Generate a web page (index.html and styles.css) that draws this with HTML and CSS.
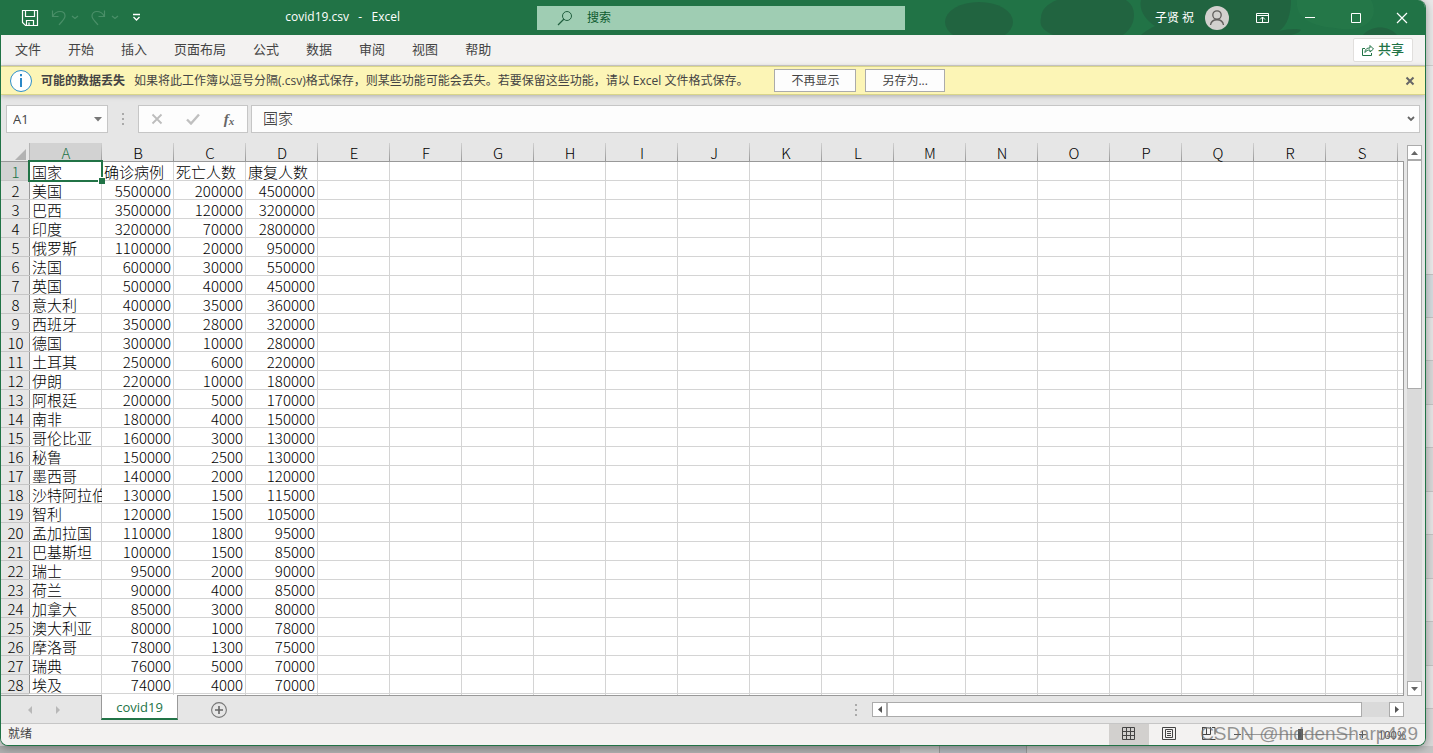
FILE: index.html
```html
<!DOCTYPE html>
<html lang="zh-CN">
<head>
<meta charset="utf-8">
<title>covid19.csv - Excel</title>
<link rel="stylesheet" href="styles.css">
</head>
<body>
<div class="window">
  <header class="titlebar">
    <svg class="art" width="500" height="35" viewBox="0 0 500 35" aria-hidden="true">
      <g fill="#215f3f" fill-opacity=".75"><ellipse cx="54" cy="22" rx="34" ry="20"/><path d="M116 18C116 2 140-6 172-6S212 6 208 22C206 28 202 32 198 35H128C118 30 114 26 116 18Z"/><path d="M216 0H366C366 14 362 26 354 31C362 29 372 28 376 30C374 33 370 34 366 35H216C222 30 226 28 230 26C218 18 214 8 216 0Z"/><path d="M438 35C446 25 464 25 472 35Z"/></g>
      <path d="M372 0H446C456 18 440 34 410 28C386 26 370 18 372 0Z" fill="#2a8050" fill-opacity=".3"/>
    </svg>
    <div class="quick">
      <button aria-label="保存"><svg width="18" height="18" viewBox="0 0 18 18"><path d="M1.500 1.500h15v15h-12l-3-3zM4.500 1.500v6h9v-6M5.500 16v-4.500h7V16M8 16v-2.500" fill="none" stroke="#fff" stroke-width="1.200"/></svg></button>
      <button aria-label="撤消"><svg width="28" height="18" viewBox="0 0 28 18"><path d="M1.500 1.500v6h6M2 7C5 1 14 1 14 7c0 3-3 5-6 9M21 7l3 2.500L27 7" fill="none" stroke="#4a8f68" stroke-width="1.200"/></svg></button>
      <button aria-label="恢复"><svg width="28" height="18" viewBox="0 0 28 18"><path d="M13.500 1.500v6h-6M13 7C10 1 1 1 1 7c0 3 3 5 6 9M21 7l3 2.500L27 7" fill="none" stroke="#4a8f68" stroke-width="1.200"/></svg></button>
      <button aria-label="自定义快速访问工具栏"><svg width="9" height="9" viewBox="0 0 9 9"><path d="M1 1.500h7M1.500 4l3 3 3-3" fill="none" stroke="#fff" stroke-width="1.300"/></svg></button>
    </div>
    <h1 class="doc">covid19.csv&nbsp; &nbsp;-&nbsp; &nbsp;Excel</h1>
    <label class="search">
      <svg width="16" height="16" viewBox="0 0 16 16"><circle cx="10" cy="6" r="4.500" fill="none" stroke="#215f3f"/><path d="M7 9L1 15" stroke="#215f3f" stroke-width="1.200"/></svg>
      <input type="text" aria-label="搜索" placeholder="搜索">
    </label>
    <div class="account">
      <span>子贤 祝</span>
      <svg width="24" height="24" viewBox="0 0 24 24"><circle cx="12" cy="12" r="12" fill="#d2d0ce"/><circle cx="12" cy="9" r="4.200" fill="none" stroke="#5f5d5b" stroke-width="1.300"/><path d="M5.500 19c1-7 12-7 13 0" fill="none" stroke="#5f5d5b" stroke-width="1.300"/></svg>
    </div>
    <div class="controls">
      <button aria-label="功能区显示选项"><svg width="14" height="12" viewBox="0 0 14 12"><path d="M.5 1.500h12v9H.5zM.5 3.500h12M6.500 10V5M4 7.500L6.500 5 9 7.500" fill="none" stroke="#fff"/></svg></button>
      <button aria-label="最小化"><svg width="12" height="12" viewBox="0 0 12 12"><path d="M1 5.500h10" stroke="#fff"/></svg></button>
      <button aria-label="最大化"><svg width="12" height="12" viewBox="0 0 12 12"><path d="M1.500 1.500h9v9h-9z" fill="none" stroke="#fff"/></svg></button>
      <button aria-label="关闭"><svg width="12" height="12" viewBox="0 0 12 12"><path d="M1 1l10 10M11 1L1 11" stroke="#fff" stroke-width="1.200"/></svg></button>
    </div>
  </header>

  <nav class="ribbon">
    <div class="tabs">
      <button>文件</button><button>开始</button><button>插入</button><button>页面布局</button><button>公式</button><button>数据</button><button>审阅</button><button>视图</button><button>帮助</button>
    </div>
    <button class="share"><svg width="12" height="12" viewBox="0 0 12 12"><path d="M3 4.500H.5v7h9V9M3 8.500C3 5 5 4 8 4V1.500l3.500 3.500L8 8V6C6 6 4 6.500 3 8.500z" fill="none" stroke="#217346"/></svg><span>共享</span></button>
  </nav>

  <section class="message">
    <svg class="info" width="24" height="24" viewBox="0 0 24 24"><circle cx="12" cy="12" r="10.500" fill="#fff" stroke="#2f8fc8"/><path d="M12 5v2.200M12 9v9" stroke="#2b88c6" stroke-width="2"/></svg>
    <strong>可能的数据丢失</strong>
    <p>如果将此工作簿以逗号分隔(.csv)格式保存，则某些功能可能会丢失。若要保留这些功能，请以 Excel 文件格式保存。</p>
    <button class="plain">不再显示</button>
    <button class="plain">另存为...</button>
    <button class="dismiss" aria-label="关闭消息"><svg width="10" height="10" viewBox="0 0 10 10"><path d="M1.500 1.500l7 7M8.500 1.500l-7 7" stroke="#666" stroke-width="2"/></svg></button>
  </section>

  <section class="formula">
    <label class="namebox"><input type="text" aria-label="名称框" value="A1"><svg width="8" height="5" viewBox="0 0 8 5"><path d="M0 0h8L4 4.500z" fill="#777"/></svg></label>
    <svg class="grip" width="2" height="12" viewBox="0 0 2 12"><path d="M0 0h2v2H0zM0 5h2v2H0zM0 10h2v2H0z" fill="#aaa"/></svg>
    <div class="fx">
      <button aria-label="取消"><svg width="12" height="12" viewBox="0 0 12 12"><path d="M1.500 1.500l9 9M10.500 1.500l-9 9" stroke="#bdbdbd" stroke-width="1.800"/></svg></button>
      <button aria-label="输入"><svg width="14" height="12" viewBox="0 0 14 12"><path d="M1 6.500l4 4L13 1.500" fill="none" stroke="#c0c0c0" stroke-width="2.400"/></svg></button>
      <button aria-label="插入函数"><i>f</i><i class="sub">x</i></button>
    </div>
    <label class="entry"><input type="text" aria-label="编辑栏" value="国家"><svg width="8" height="6" viewBox="0 0 8 6"><path d="M1 1l3 3 3-3" fill="none" stroke="#666" stroke-width="1.800"/></svg></label>
  </section>

  <main class="work">
    <div class="grid">
      <table>
        <colgroup><col class="c-head"><col span="19" class="c-cell"><col></colgroup>
        <thead><tr><th class="corner"><svg width="11" height="11" viewBox="0 0 11 11"><path d="M11 0v11H0z" fill="#b2b2b2"/></svg></th><th class="on">A</th><th>B</th><th>C</th><th>D</th><th>E</th><th>F</th><th>G</th><th>H</th><th>I</th><th>J</th><th>K</th><th>L</th><th>M</th><th>N</th><th>O</th><th>P</th><th>Q</th><th>R</th><th>S</th><th></th></tr></thead>
        <tbody>
          <tr><th class="on">1</th><td class="active">国家</td><td class="t">确诊病例</td><td class="t">死亡人数</td><td class="t">康复人数</td></tr>
          <tr><th>2</th><td>美国</td><td>5500000</td><td>200000</td><td>4500000</td></tr>
          <tr><th>3</th><td>巴西</td><td>3500000</td><td>120000</td><td>3200000</td></tr>
          <tr><th>4</th><td>印度</td><td>3200000</td><td>70000</td><td>2800000</td></tr>
          <tr><th>5</th><td>俄罗斯</td><td>1100000</td><td>20000</td><td>950000</td></tr>
          <tr><th>6</th><td>法国</td><td>600000</td><td>30000</td><td>550000</td></tr>
          <tr><th>7</th><td>英国</td><td>500000</td><td>40000</td><td>450000</td></tr>
          <tr><th>8</th><td>意大利</td><td>400000</td><td>35000</td><td>360000</td></tr>
          <tr><th>9</th><td>西班牙</td><td>350000</td><td>28000</td><td>320000</td></tr>
          <tr><th>10</th><td>德国</td><td>300000</td><td>10000</td><td>280000</td></tr>
          <tr><th>11</th><td>土耳其</td><td>250000</td><td>6000</td><td>220000</td></tr>
          <tr><th>12</th><td>伊朗</td><td>220000</td><td>10000</td><td>180000</td></tr>
          <tr><th>13</th><td>阿根廷</td><td>200000</td><td>5000</td><td>170000</td></tr>
          <tr><th>14</th><td>南非</td><td>180000</td><td>4000</td><td>150000</td></tr>
          <tr><th>15</th><td>哥伦比亚</td><td>160000</td><td>3000</td><td>130000</td></tr>
          <tr><th>16</th><td>秘鲁</td><td>150000</td><td>2500</td><td>130000</td></tr>
          <tr><th>17</th><td>墨西哥</td><td>140000</td><td>2000</td><td>120000</td></tr>
          <tr><th>18</th><td class="clip">沙特阿拉伯</td><td>130000</td><td>1500</td><td>115000</td></tr>
          <tr><th>19</th><td>智利</td><td>120000</td><td>1500</td><td>105000</td></tr>
          <tr><th>20</th><td>孟加拉国</td><td>110000</td><td>1800</td><td>95000</td></tr>
          <tr><th>21</th><td>巴基斯坦</td><td>100000</td><td>1500</td><td>85000</td></tr>
          <tr><th>22</th><td>瑞士</td><td>95000</td><td>2000</td><td>90000</td></tr>
          <tr><th>23</th><td>荷兰</td><td>90000</td><td>4000</td><td>85000</td></tr>
          <tr><th>24</th><td>加拿大</td><td>85000</td><td>3000</td><td>80000</td></tr>
          <tr><th>25</th><td>澳大利亚</td><td>80000</td><td>1000</td><td>78000</td></tr>
          <tr><th>26</th><td>摩洛哥</td><td>78000</td><td>1300</td><td>75000</td></tr>
          <tr><th>27</th><td>瑞典</td><td>76000</td><td>5000</td><td>70000</td></tr>
          <tr><th>28</th><td>埃及</td><td>74000</td><td>4000</td><td>70000</td></tr>
        </tbody>
      </table>
    </div>
    <div class="vscroll">
      <button aria-label="向上滚动"><svg width="7" height="4" viewBox="0 0 7 4"><path d="M3.500 0L7 4H0z" fill="#666"/></svg></button>
      <div class="track"><div class="thumb"></div></div>
      <button aria-label="向下滚动"><svg width="7" height="4" viewBox="0 0 7 4"><path d="M0 0h7L3.500 4z" fill="#666"/></svg></button>
    </div>
  </main>

  <section class="sheets">
    <div class="sheetnav">
      <button aria-label="上一个工作表"><svg width="4" height="8" viewBox="0 0 4 8"><path d="M4 0v8L0 4z" fill="#b8b8b8"/></svg></button>
      <button aria-label="下一个工作表"><svg width="4" height="8" viewBox="0 0 4 8"><path d="M0 0v8l4-4z" fill="#b8b8b8"/></svg></button>
    </div>
    <button class="sheet">covid19</button>
    <button class="add" aria-label="新工作表"><svg width="16" height="16" viewBox="0 0 16 16"><circle cx="8" cy="8" r="7.400" fill="none" stroke="#777" stroke-width="1.100"/><path d="M8 4v8M4 8h8" stroke="#666" stroke-width="1.600"/></svg></button>
    <svg class="grip" width="2" height="12" viewBox="0 0 2 12"><path d="M0 0h2v2H0zM0 5h2v2H0zM0 10h2v2H0z" fill="#aaa"/></svg>
    <div class="hscroll">
      <button aria-label="向左滚动"><svg width="4" height="7" viewBox="0 0 4 7"><path d="M4 0v7L0 3.500z" fill="#555"/></svg></button>
      <div class="track"><div class="thumb"></div></div>
      <button aria-label="向右滚动"><svg width="4" height="7" viewBox="0 0 4 7"><path d="M0 0v7l4-3.500z" fill="#555"/></svg></button>
    </div>
  </section>

  <footer class="status">
    <span class="ready">就绪</span>
    <button class="view on" aria-label="普通"><svg width="14" height="14" viewBox="0 0 14 14"><path d="M.5.5h12v12H.5zM4.500.5v12M8.500.5v12M.5 4.500h12M.5 8.500h12" fill="none" stroke="#444"/></svg></button>
    <button class="view" aria-label="页面布局"><svg width="14" height="14" viewBox="0 0 14 14"><path d="M.5.5h13v12H.5zM3.500 2.500h7v8h-7zM5 4.500h4M5 6.500h4M5 8.500h4" fill="none" stroke="#444"/></svg></button>
    <button class="view" aria-label="分页预览"><svg width="14" height="14" viewBox="0 0 14 14"><path d="M.5 0v12.500h13M.5.500h4v7M8.500 0v7.500h-8M10 .5h3v7" fill="none" stroke="#444"/></svg></button>
    <div class="zoom">
      <button aria-label="缩小"><svg width="7" height="7" viewBox="0 0 7 7"><path d="M0 3.500h7" stroke="#555"/></svg></button>
      <input type="range" aria-label="显示比例" min="0" max="100" value="50">
      <button aria-label="放大"><svg width="7" height="7" viewBox="0 0 7 7"><path d="M0 3.500h7M3.500 0v7" stroke="#555"/></svg></button>
      <button class="percent">100%</button>
    </div>
    <span class="mark">CSDN @hiddenSharp429</span>
  </footer>
</div>
</body>
</html>
```

FILE: styles.css
```css
* { box-sizing: border-box; }

body {
  margin: 0;
  height: 100vh;
  padding: 0 7px 7px 0;
  overflow: hidden;
  background:
    linear-gradient(90deg, #b0b0b0 0 900px, #c4c4c4 900px 939px, #999 939px 940px, #b4b8bd 940px 1026px, #999 1026px 1027px, #c4c4c4 1027px) bottom / 100% 7px no-repeat,
    linear-gradient(#e9e9e9 0 65px, #cfcfcf 65px 66px, #ececec 66px 274px, #c4c4c4 274px 275px, #d6dde0 275px 317px, transparent 317px),
    repeating-linear-gradient(#c4c4c4 0 1px, #e6e6e6 1px 43px, #c4c4c4 43px 44px, #d9d9d9 44px 87px) 0 317px;
  font: 12px "Open Sans", "Noto Sans CJK SC", sans-serif;
  color: #444;
}

button {
  display: flex;
  align-items: center;
  justify-content: center;
  margin: 0;
  padding: 0;
  border: 0;
  background: none;
  font: inherit;
  color: inherit;
}

input {
  flex: 1;
  min-width: 0;
  padding: 0;
  border: 0;
  outline: 0;
  background: none;
  font: inherit;
  color: inherit;
}

svg { display: block; flex: none; }

.window {
  display: flex;
  flex-direction: column;
  height: 100%;
  overflow: hidden;
  border: 1px solid #217346;
  border-top: 0;
  border-radius: 0 8px 8px 8px;
  background: #e6e6e6;
  box-shadow: 0 2px 10px rgba(0, 0, 0, .35);
}

/* Title bar */
.titlebar {
  position: relative;
  display: grid;
  grid-template-columns: 536px minmax(200px, 368px) 1fr auto;
  align-items: center;
  flex: none;
  height: 35px;
  background: #217346;
  color: #fff;
}
.art { position: absolute; top: 0; right: 0; }
.quick {
  grid-area: 1 / 1;
  display: flex;
  align-items: center;
  gap: 12px;
  padding-left: 20px;
}
.quick button:last-child { margin-left: 1px; }
.doc {
  grid-area: 1 / 1;
  justify-self: end;
  margin: 0;
  padding: 0 137px 2px 0;
  font-size: 12px;
  font-weight: 400;
}
.search {
  grid-area: 1 / 2;
  display: flex;
  align-items: center;
  gap: 14px;
  height: 24px;
  padding-left: 20px;
  background: #9fcdb3;
  color: #0e5c2f;
}
.search input::placeholder { color: #0e5c2f; opacity: 1; }
.account {
  grid-area: 1 / 3;
  position: relative;
  display: flex;
  align-items: center;
  justify-content: flex-end;
  gap: 11px;
  padding-right: 10px;
}
.account span { padding-bottom: 2px; }
.controls { grid-area: 1 / 4; position: relative; display: flex; }
.controls button { width: 46px; height: 34px; }
.controls button:first-child { width: 48px; }

/* Ribbon tabs */
.ribbon {
  display: flex;
  justify-content: space-between;
  align-items: center;
  flex: none;
  height: 31px;
  padding: 0 12px 0 14px;
  border-bottom: 1px solid #d2d0ce;
  background: #f3f2f1;
  font-size: 13px;
}
.tabs { display: flex; gap: 27px; padding-bottom: 4px; }
.share {
  gap: 4px;
  width: 60px;
  height: 24px;
  border: 1px solid #e1dfdd;
  border-radius: 2px;
  background: #fff;
  color: #217346;
  font-weight: 500;
}
.share span { padding-bottom: 4px; }

/* Message bar */
.message {
  position: relative;
  display: flex;
  align-items: center;
  flex: none;
  height: 29px;
  padding: 0 10px 0 8px;
  border: solid #d9d58a;
  border-width: 1px 0;
  background: #fcf5b6;
  box-shadow: 0 1px 5px rgba(0, 0, 0, .25);
  white-space: nowrap;
}
.message strong { margin: 0 9px 0 8px; padding-bottom: 2px; }
.message p { margin: 0 26px 0 0; padding-bottom: 2px; }
.plain {
  height: 23px;
  margin-right: 9px;
  padding: 0 16px 2px;
  border: 1px solid #ababab;
  background: #fdfdfd;
}
.dismiss { margin-left: auto; }

/* Formula bar */
.formula {
  display: flex;
  align-items: center;
  flex: none;
  height: 48px;
  padding: 0 5px;
}
.namebox, .fx, .entry {
  display: flex;
  align-items: center;
  height: 28px;
  border: 1px solid #c6c6c6;
  background: #fdfdfd;
}
.namebox { width: 102px; padding: 0 5px 0 6px; font-size: 13px; }
.formula .grip { margin: 0 14px; }
.fx { width: 110px; margin-right: 3px; }
.fx button { flex: 1; }
.fx i { font: italic 700 15px "Liberation Serif", serif; color: #666; }
.fx .sub { padding-top: 4px; font-size: 11px; }
.entry { flex: 1; padding: 0 4px 0 11px; font: 300 15px "Noto Sans CJK SC", sans-serif; color: #222; }
.entry input { padding-bottom: 4px; }

/* Worksheet */
.work { display: flex; flex: 1; min-height: 0; }
.grid {
  position: relative;
  flex: 1;
  min-width: 0;
  overflow: hidden;
  border-bottom: 1px solid #999;
  background:
    repeating-linear-gradient(90deg, transparent 0 71px, #d4d4d4 71px 72px) 29px 0,
    repeating-linear-gradient(#fff 0 18px, #d4d4d4 18px 19px);
}
.grid::before {
  content: "";
  position: absolute;
  inset: 0 auto 0 0;
  width: 28px;
  background: #e6e6e6;
}
.grid::after {
  content: "";
  position: absolute;
  inset: 18px 0 0 auto;
  width: 1px;
  background: #999;
}
table {
  position: relative;
  width: 100%;
  border-spacing: 0;
  table-layout: fixed;
  font: 300 15px/17px "Noto Sans CJK SC", sans-serif;
  color: #000;
}
.c-head { width: 29px; }
.c-cell { width: 72px; }
tr { height: 19px; }
th, td { height: 19px; padding: 0; white-space: nowrap; font-weight: 300; }
th { padding-top: 1px; }
td { padding: 1px 3px 1px 0; text-align: right; }
td:nth-child(2), td.t { padding-left: 2px; text-align: left; }
td:nth-child(2) { padding-right: 0; }
td.clip { overflow-x: clip; }
thead th {
  border-bottom: 1px solid #999;
  background: linear-gradient(#d0d0d0, #999) right / 1px 100% no-repeat #e6e6e6;
}
thead th:last-child { background: #e6e6e6; }
tbody th {
  border-bottom: 1px solid #c6c6c6;
  background: linear-gradient(#999, #999) right / 1px 100% no-repeat #e6e6e6;
}
thead .corner { background: #e6e6e6; border-right: 1px solid #b5b5b5; }
.corner svg { margin: 3px 3px 0 auto; }
thead .on, tbody .on { background-color: #d2d2d2; color: #217346; }
td.active { position: relative; }
.active::before {
  content: "";
  position: absolute;
  inset: -2px -1px -1px -2px;
  border: 2px solid #217346;
}
.active::after {
  content: "";
  position: absolute;
  right: -3px;
  bottom: -3px;
  width: 6px;
  height: 6px;
  border: solid #fff;
  border-width: 1px 0 0 1px;
  background: #217346;
}

/* Scroll bars */
.vscroll {
  display: flex;
  flex-direction: column;
  width: 21px;
  padding: 2px 3px 0;
}
.vscroll button, .hscroll button {
  flex: none;
  width: 15px;
  height: 15px;
  border: 1px solid #ababab;
  background: #fff;
}
.track { flex: 1; background: #dadada; }
.thumb { border: 1px solid #ababab; background: #fff; }
.vscroll .thumb { height: 44%; }
.hscroll { display: flex; width: 532px; }
.hscroll .thumb { width: 475px; height: 100%; }

/* Sheet tabs */
.sheets {
  display: flex;
  align-items: center;
  flex: none;
  height: 27px;
  padding-right: 21px;
}
.sheetnav { display: flex; gap: 24px; width: 100px; padding-left: 27px; }
.sheet {
  align-self: flex-start;
  position: relative;
  z-index: 1;
  width: 77px;
  height: 25px;
  margin-top: -1px;
  border: solid #999;
  border-width: 0 1px;
  border-bottom: 2px solid #217346;
  background: #fff;
  color: #217346;
  font-size: 13px;
}
.add { margin-left: 33px; }
.sheets .grip { margin: 0 15px 0 auto; }

/* Status bar */
.status {
  position: relative;
  display: flex;
  flex: none;
  height: 22px;
  padding-right: 19px;
  border-top: 1px solid #c6c6c6;
  background: #f3f2f1;
}
.ready { margin-right: auto; padding-left: 7px; line-height: 20px; }
.view { width: 40px; padding-bottom: 1px; }
.view.on { background: #d2d0ce; }
.zoom { display: flex; align-items: center; margin-left: 5px; }
.zoom input {
  flex: none;
  width: 110px;
  height: 12px;
  margin: 0 4px;
  appearance: none;
  background: linear-gradient(#999, #999) center / 100% 1px no-repeat;
}
.zoom input::-webkit-slider-thumb { appearance: none; width: 5px; height: 11px; background: #555; }
.percent { margin-left: 12px; font-size: 11px; }
.mark {
  position: absolute;
  right: 7px;
  bottom: 1px;
  font: 19px/20px "Liberation Sans", sans-serif;
  color: rgba(110, 110, 110, .72);
}
```
